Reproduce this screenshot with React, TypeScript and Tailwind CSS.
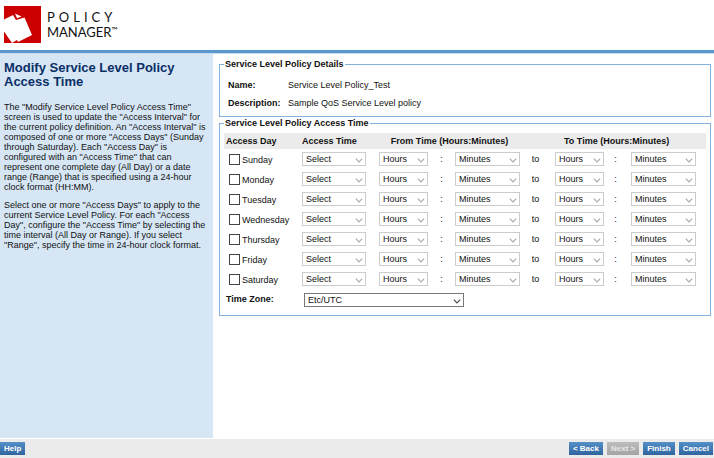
import type { ReactNode } from "react";
import { useState } from "react";

const DAYS = ["Sunday", "Monday", "Tuesday", "Wednesday", "Thursday", "Friday", "Saturday"];

function Chevron({ className }: { className: string }) {
  return (
    <svg
      viewBox="0 0 8 5"
      aria-hidden="true"
      className={`pointer-events-none absolute right-[3px] top-1/2 h-[5px] w-2 -translate-y-px fill-none ${className}`}
    >
      <path d="M0.8 0.6 L4 3.9 L7.2 0.6" stroke="currentColor" strokeWidth="1.1" />
    </svg>
  );
}

function SmallSelect({ label, option, width }: { label: string; option: string; width: string }) {
  return (
    <div className={`relative ${width}`}>
      <select
        disabled
        aria-label={label}
        className="block h-[14px] w-full appearance-none border border-[#cccccc] bg-white pl-[3px] text-[9px] leading-[12px] text-[#111111] opacity-100"
      >
        <option>{option}</option>
      </select>
      <Chevron className="text-[#a8a8a8]" />
    </div>
  );
}

function Group({ title, className, children }: { title: string; className: string; children: ReactNode }) {
  return (
    <fieldset className={`min-w-0 border border-[#83b1de] px-1 ${className}`}>
      <legend className="px-px text-[9px] font-bold leading-[12px] text-[#111111]">{title}</legend>
      {children}
    </fieldset>
  );
}

function BarButton({ children, disabled = false }: { children: ReactNode; disabled?: boolean }) {
  return (
    <button
      type="button"
      disabled={disabled}
      className={`h-[13px] px-1 text-[8px] font-bold leading-[13px] ${
        disabled
          ? "bg-linear-to-b from-[#bcbcbc] to-[#a4a4a4] text-[#e8e8e8]"
          : "bg-linear-to-b from-[#5590c8] to-[#2f659f] text-white"
      }`}
    >
      {children}
    </button>
  );
}

function Logo() {
  return (
    <div className="flex items-center gap-[6px]">
      <svg viewBox="0 0 37 37" className="size-[37px]" aria-hidden="true">
        <rect width="37" height="37" fill="#cc0000" />
        <path d="M0 13.5 L9 9 L12 14 L20.5 11.5 L28 29 L14 36 L13 34 L8 37 L0 25.5 Z" fill="#ffffff" />
        <path d="M11 7.5 L17.5 10.5 L13 12.2 Z" fill="#ffffff" />
      </svg>
      <div className="font-['Lato',sans-serif] text-[#111111]">
        <div className="text-[13px] leading-[15px] tracking-[4px]">POLICY</div>
        <div className="flex text-[13px] leading-[15px]">
          MANAGER<span className="text-[8px] leading-[10px]">™</span>
        </div>
      </div>
    </div>
  );
}

export default function App() {
  const [checked, setChecked] = useState<string[]>([]);
  const toggle = (day: string) =>
    setChecked((c) => (c.includes(day) ? c.filter((d) => d !== day) : [...c, day]));

  return (
    <div className="flex min-h-screen flex-col bg-white font-['Liberation_Sans',Arial,sans-serif] text-[9px] text-[#111111]">
      <header className="border-b-[3px] border-[#5b97cf] px-1 pt-[6px] pb-[7px]">
        <Logo />
      </header>
      <div className="h-px bg-[#c9dcee]" />

      <div className="flex grow">
        <aside className="w-[213px] shrink-0 bg-[#d6e6f5] px-1 pt-[7px]">
          <h1 className="text-[13px] font-bold leading-[14px] text-[#0a2f66]">
            Modify Service Level Policy
            <br />
            Access Time
          </h1>
          <p className="mt-[13px] leading-[10px]">
            The "Modify Service Level Policy Access Time" screen is used to update the "Access Interval" for the
            current policy definition. An "Access Interval" is composed of one or more "Access Days" (Sunday through
            Saturday). Each "Access Day" is configured with an "Access Time" that can represent one complete day (All
            Day) or a date range (Range) that is specified using a 24-hour clock format (HH:MM).
          </p>
          <p className="mt-2 leading-[10px]">
            Select one or more "Access Days" to apply to the current Service Level Policy. For each "Access Day",
            configure the "Access Time" by selecting the time interval (All Day or Range). If you select "Range",
            specify the time in 24-hour clock format.
          </p>
        </aside>

        <main className="min-w-0 grow pl-[6px] pr-[3px] pt-1">
          <Group title="Service Level Policy Details" className="pb-[7px]">
            <dl className="grid grid-cols-[60px_1fr] gap-y-[6px] pl-1 pt-[9px] leading-[12px]">
              <dt className="font-bold">Name:</dt>
              <dd>Service Level Policy_Test</dd>
              <dt className="font-bold">Description:</dt>
              <dd>Sample QoS Service Level policy</dd>
            </dl>
          </Group>

          <Group title="Service Level Policy Access Time" className="pb-2">
            <table className="mt-1 w-full table-fixed text-left leading-[12px]">
              <colgroup>
                <col className="w-[78px]" />
                <col className="w-[77px]" />
                <col className="w-[49px]" />
                <col className="w-[27px]" />
                <col className="w-[65px]" />
                <col className="w-[35px]" />
                <col className="w-[49px]" />
                <col className="w-[27px]" />
                <col />
              </colgroup>
              <thead>
                <tr className="h-4 bg-[#ebebeb]">
                  <th className="pl-[2px]">Access Day</th>
                  <th>Access Time</th>
                  <th colSpan={3} className="text-center">From Time (Hours:Minutes)</th>
                  <th />
                  <th colSpan={3} className="pl-[9px]">To Time (Hours:Minutes)</th>
                </tr>
              </thead>
              <tbody>
                {DAYS.map((day) => (
                  <tr key={day} className="h-5">
                    <td className="pl-[5px]">
                      <label className="flex items-center gap-[2px]">
                        <input
                          type="checkbox"
                          checked={checked.includes(day)}
                          onChange={() => toggle(day)}
                          className="size-[11px] shrink-0 appearance-none border border-[#444444] bg-white checked:bg-[#5b97cf]"
                        />
                        <span className="pt-[2px]">{day}</span>
                      </label>
                    </td>
                    <td>
                      <SmallSelect label={`${day} access time`} option="Select" width="w-[64px]" />
                    </td>
                    <td>
                      <SmallSelect label={`${day} from hours`} option="Hours" width="w-[49px]" />
                    </td>
                    <td className="text-center">:</td>
                    <td>
                      <SmallSelect label={`${day} from minutes`} option="Minutes" width="w-[65px]" />
                    </td>
                    <td className="pr-1 text-center">to</td>
                    <td>
                      <SmallSelect label={`${day} to hours`} option="Hours" width="w-[49px]" />
                    </td>
                    <td className="pr-1 text-center">:</td>
                    <td>
                      <SmallSelect label={`${day} to minutes`} option="Minutes" width="w-[65px]" />
                    </td>
                  </tr>
                ))}
              </tbody>
            </table>
            <div className="mt-1 flex items-center pl-[2px]">
              <label htmlFor="zone" className="w-[78px] font-bold">Time Zone:</label>
              <div className="relative w-[160px]">
                <select
                  id="zone"
                  className="block h-[14px] w-full appearance-none border border-[#777777] bg-white pl-[3px] text-[9px] leading-[12px] text-[#111111]"
                >
                  <option>Etc/UTC</option>
                </select>
                <Chevron className="text-[#444444]" />
              </div>
            </div>
          </Group>
        </main>
      </div>

      <footer className="mt-px flex h-[19px] items-center gap-1 bg-[#ebebeb] pr-px">
        <BarButton>Help</BarButton>
        <div className="grow" />
        <BarButton>&lt; Back</BarButton>
        <BarButton disabled>Next &gt;</BarButton>
        <BarButton>Finish</BarButton>
        <BarButton>Cancel</BarButton>
      </footer>
    </div>
  );
}
